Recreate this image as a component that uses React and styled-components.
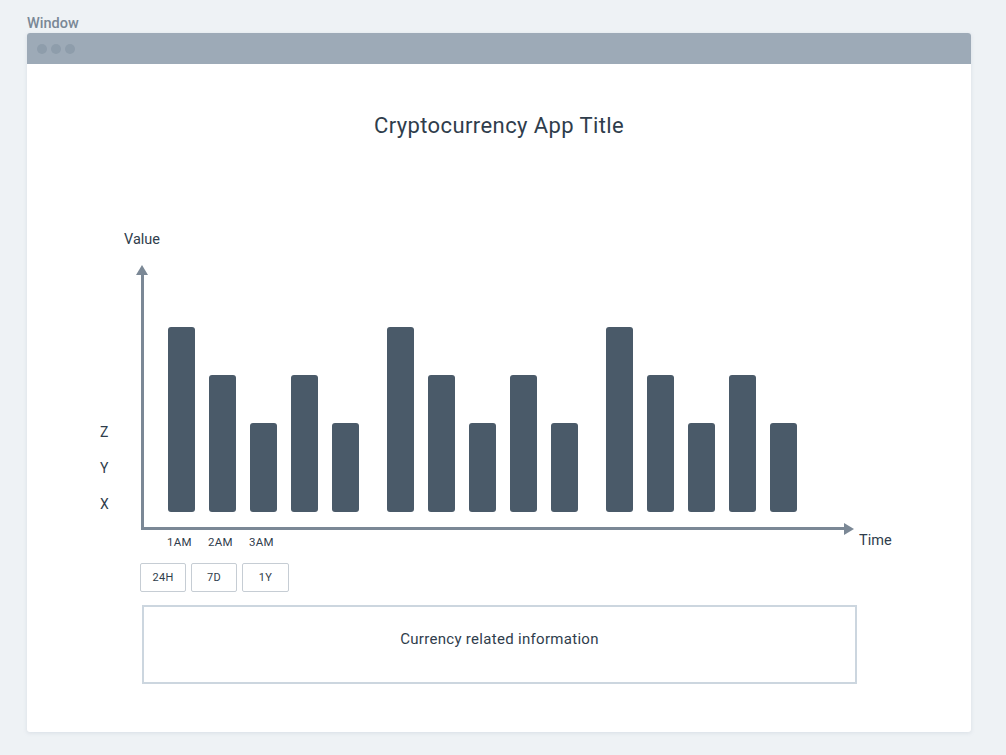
import styled, { createGlobalStyle } from 'styled-components';

const GlobalStyle = createGlobalStyle`
  html, body {
    margin: 0;
    padding: 0;
    background: #eef2f5;
  }
  body {
    font-family: Roboto, "Noto Sans", "Liberation Sans", sans-serif;
    color: #2f3d4c;
  }
`;

const Page = styled.div`
  width: 1006px;
  height: 755px;
  padding: 14px 35px 0 27px;
  box-sizing: border-box;
`;

const WindowLabel = styled.div`
  font-size: 14.5px;
  font-weight: 500;
  line-height: 19px;
  color: #7a8896;
`;

const Window = styled.div`
  width: 944px;
  background: #fff;
  border-radius: 3px;
  box-shadow: 0 1px 4px rgba(120, 140, 160, 0.18);
  overflow: hidden;
`;

const TitleBar = styled.div`
  height: 31px;
  background: #9daab7;
  display: flex;
  align-items: center;
  gap: 4px;
  padding-left: 10px;
`;

const Dot = styled.span`
  width: 10px;
  height: 10px;
  border-radius: 50%;
  background: #8e9dab;
`;

const Body = styled.div`
  height: 668px;
  box-sizing: border-box;
  padding: 45px 0 0 113px;
`;

const AppTitle = styled.h1`
  margin: 0 0 0 -113px;
  font-size: 22px;
  font-weight: 400;
  line-height: 34px;
  text-align: center;
  letter-spacing: 0.4px;
  color: #2f3d4c;
`;

const ValueLabel = styled.div`
  margin: 87px 0 0 -16px;
  font-size: 14.5px;
  line-height: 20px;
`;

const ChartRow = styled.div`
  display: flex;
  align-items: flex-end;
  margin-top: 22px;
  margin-left: -41px;
`;

const LevelLabels = styled.div`
  width: 42px;
  display: flex;
  flex-direction: column;
  gap: 16px;
  padding-bottom: 16px;
  box-sizing: border-box;
`;

const Level = styled.span`
  font-size: 14px;
  line-height: 20px;
  padding-left: 1px;
`;

const Plot = styled.div`
  position: relative;
  width: 703px;
  height: 258px;
  box-sizing: border-box;
  border-left: 3px solid #7b8896;
  border-bottom: 3px solid #7b8896;
  display: flex;
  align-items: flex-end;
  padding: 0 0 15px 24px;

  &::before {
    content: '';
    position: absolute;
    left: -8px;
    top: -7px;
    border-left: 6.5px solid transparent;
    border-right: 6.5px solid transparent;
    border-bottom: 10px solid #7b8896;
  }

  &::after {
    content: '';
    position: absolute;
    right: -10px;
    bottom: -8px;
    border-top: 6.5px solid transparent;
    border-bottom: 6.5px solid transparent;
    border-left: 10px solid #7b8896;
  }
`;

const BarGroup = styled.div`
  display: flex;
  align-items: flex-end;
  gap: 14px;
  margin-right: 28px;
`;

const Bar = styled.div`
  width: 27px;
  height: ${p => p.$h}px;
  background: #4a5a69;
  border-radius: 3px;
`;

const TimeLabel = styled.span`
  font-size: 14.5px;
  line-height: 20px;
  margin: 0 0 -21px 15px;
`;

const TickRow = styled.div`
  display: flex;
  gap: 14px;
  padding-left: 26px;
  margin-top: 4px;
`;

const Tick = styled.span`
  width: 27px;
  text-align: center;
  font-size: 11.5px;
  line-height: 16px;
  letter-spacing: 0.3px;
`;

const RangeRow = styled.div`
  display: flex;
  gap: 5px;
  margin-top: 13px;
`;

const RangeButton = styled.button`
  width: ${p => p.$w}px;
  height: 29px;
  background: #fff;
  border: 1.5px solid #c6cdd4;
  border-radius: 2px;
  font-family: inherit;
  font-size: 11px;
  letter-spacing: 0.3px;
  color: #2f3d4c;
  padding: 0;
`;

const InfoBox = styled.div`
  width: 715px;
  height: 79px;
  box-sizing: border-box;
  margin: 13px 0 0 2px;
  border: 2px solid #ccd6df;
  display: flex;
  justify-content: center;
  padding-top: 22px;
  font-size: 15px;
  letter-spacing: 0.3px;
  line-height: 20px;
`;

const groups = [0, 1, 2];
const heights = [185, 137, 89, 137, 89];

export default function App() {
  return (
    <>
      <GlobalStyle />
      <Page>
        <WindowLabel>Window</WindowLabel>
        <Window>
          <TitleBar>
            <Dot />
            <Dot />
            <Dot />
          </TitleBar>
          <Body>
            <AppTitle>Cryptocurrency App Title</AppTitle>
            <ValueLabel>Value</ValueLabel>
            <ChartRow>
              <LevelLabels>
                <Level>Z</Level>
                <Level>Y</Level>
                <Level>X</Level>
              </LevelLabels>
              <Plot>
                {groups.map(g => (
                  <BarGroup key={g}>
                    {heights.map((h, i) => (
                      <Bar key={i} $h={h} />
                    ))}
                  </BarGroup>
                ))}
              </Plot>
              <TimeLabel>Time</TimeLabel>
            </ChartRow>
            <TickRow>
              <Tick>1AM</Tick>
              <Tick>2AM</Tick>
              <Tick>3AM</Tick>
            </TickRow>
            <RangeRow>
              <RangeButton $w={46}>24H</RangeButton>
              <RangeButton $w={46}>7D</RangeButton>
              <RangeButton $w={47}>1Y</RangeButton>
            </RangeRow>
            <InfoBox>Currency related information</InfoBox>
          </Body>
        </Window>
      </Page>
    </>
  );
}
